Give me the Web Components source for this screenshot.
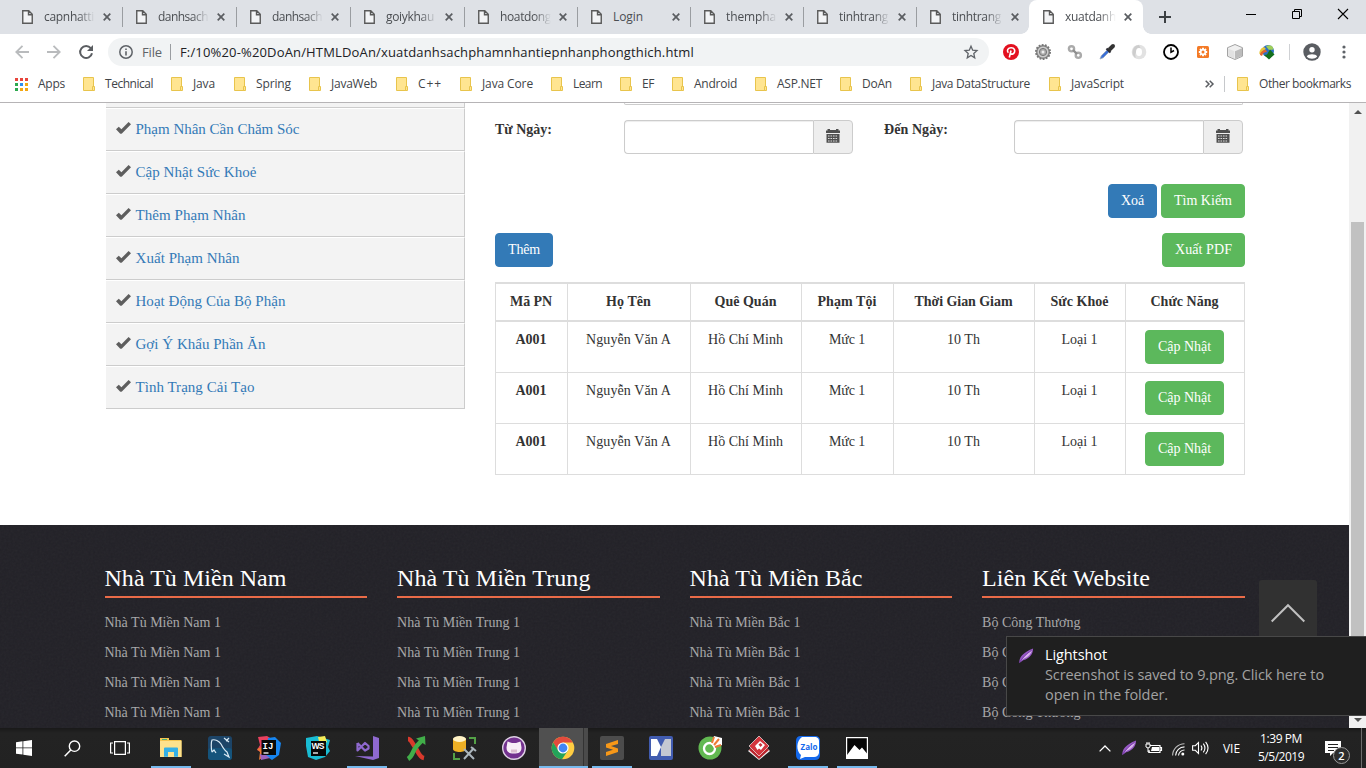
<!DOCTYPE html>
<html lang="vi">
<head>
<meta charset="utf-8">
<title>xuatdanhsachphamnhantiepnhanphongthich</title>
<style>
html,body{margin:0;height:100%;overflow:hidden;background:#fff}
body{font-family:"Open Sans","Noto Sans",sans-serif;font-size:12px}
</style>
</head>
<body>
<desktop-screen></desktop-screen>
<script>
const def=(n,css,html,after)=>customElements.define(n,class extends HTMLElement{
  connectedCallback(){
    if(this.shadowRoot)return;
    const r=this.attachShadow({mode:'open'});
    r.innerHTML=`<style>*{box-sizing:border-box}${css}</style>`+(typeof html==='function'?html(this):html);
    if(after)after(this,r);
  }
});

/* Text whose tracking is tuned to a given advance width */
def('fit-text',':host{display:inline-block;white-space:nowrap;flex:none}span{display:inline-block}','<span><slot></slot></span>',(h,r)=>{
  const w=+h.getAttribute('w');if(!w)return;
  const s=r.querySelector('span'),n=[...h.textContent].length;
  const nat=s.getBoundingClientRect().width;
  s.style.letterSpacing=((w-nat)/n).toFixed(3)+'px';
  h.style.width=w+'px';
});

const feather='<path d="M1.5 16C1 10 5 5 16 .5C16 6 13 11 5.500 13L1.500 16z" fill="#9659c4"/><path d="M3 13.500C6 9 10 5 15 2C14 6 11 9.500 6 11.500z" fill="#d9b4ec"/><path d="M1.500 15.500C5 10 9 6 14.500 2.500" stroke="#7337a5" fill="none"/>';
const ICONS={
 file:['11 14','<path d="M.75.750h6l3.500 3.500v9H.750zM6.500.750v4h3.750" fill="#f3f4f6" stroke="#5a5a5a" stroke-width="1.400"/>'],
 close:['8 8','<path d="M.7.700l6.600 6.600M7.300.700L.700 7.300" stroke="#5a5d61" stroke-width="1.700"/>'],
 plus:['12 12','<path d="M6 0v12M0 6h12" stroke="#3c4043" stroke-width="2"/>'],
 min:['10 10','<path d="M0 5.500h10" stroke="#000"/>'],
 max:['10 10','<path d="M.5 2.500h7v7h-7zM2.500 2.500v-2h7v7h-2" fill="none" stroke="#000"/>'],
 x:['10 10','<path d="M0 0l10 10M10 0L0 10" stroke="#000" stroke-width="1.100"/>'],
 back:['14 14','<path d="M14 7H1.500M7.500.800L1.300 7l6.200 6.200" fill="none" stroke="#b9bbbd" stroke-width="1.800"/>'],
 fwd:['14 14','<path d="M0 7h12.500M6.500.800L12.700 7l-6.200 6.200" fill="none" stroke="#b9bbbd" stroke-width="1.800"/>'],
 reload:['14 14','<path d="M11.800 3.200A6 6 0 1 0 13 8.300" fill="none" stroke="#5a5d61" stroke-width="2"/><path d="M14 0v6H8z" fill="#5a5d61"/>'],
 info:['14 14','<circle cx="7" cy="7" r="6.200" fill="none" stroke="#5f6368" stroke-width="1.500"/><path d="M7 6.200v4.300M7 3.400v1.600" stroke="#5f6368" stroke-width="1.600"/>'],
 star:['14 14','<path d="M7 1.200l1.700 4 4.300.400-3.200 2.900.900 4.300L7 10.500l-3.700 2.300.900-4.300L1 5.600l4.300-.4z" fill="none" stroke="#5f6368" stroke-width="1.300"/>'],
 pin:['16 16','<circle cx="8" cy="8" r="8" fill="#e3101f"/><path d="M6.300 13.500L8 6.500M5.300 8.800C3.300 6.500 5 3.700 8.200 3.700c3.400 0 4 2.700 3.200 4.700-.800 2-3 2.300-3.900.900" fill="none" stroke="#fff" stroke-width="1.600"/>'],
 gear:['16 16','<circle cx="8" cy="8" r="7" fill="#888" stroke="#777" stroke-width="2" stroke-dasharray="1.800 1.350"/><circle cx="8" cy="8" r="5.500" fill="#ccc"/><circle cx="8" cy="8" r="3.600" fill="#aaa" stroke="#777"/><circle cx="8" cy="8" r="1.500" fill="#eee"/>'],
 links:['16 16','<g fill="none" stroke="#aaa" stroke-width="2.400"><circle cx="4.500" cy="4.800" r="2.600"/><circle cx="11.300" cy="11.300" r="2.600"/><path d="M6 6l4 4" stroke="#8f8f8f"/></g>'],
 dropper:['16 16','<path d="M1 15l1.300-3.300L9 5l2 2-6.700 6.700z" fill="#3b6fd6" stroke="#9ab" stroke-width=".8"/><path d="M7.500 4.500l4 4M9.500 6.500L14 2" stroke="#2c2c34" stroke-width="2.200"/><path d="M11 5l3-3" stroke="#333" stroke-width="4" stroke-linecap="round"/>'],
 ring:['16 16','<circle cx="8" cy="8" r="7.300" fill="#e2e2e2"/><path d="M8 1a7 7 0 0 0-3 13c-2-5 1-8 5-9z" fill="#cdcdcd"/><ellipse cx="8" cy="8" rx="3" ry="4" fill="#fff"/>'],
 clock:['16 16','<circle cx="8" cy="8" r="7" fill="#fff" stroke="#000" stroke-width="1.800"/><path d="M8 3.500V8.300l3-1.800" fill="none" stroke="#000" stroke-width="1.500"/>'],
 cog:['12 12','<rect width="12" height="12" rx="1.500" fill="#f47a26"/><path d="M6 1.800v8.400M1.800 6h8.400M3 3l6 6M9 3L3 9" stroke="#fff" stroke-width="1.900"/><circle cx="6" cy="6" r="3" fill="#fff"/><circle cx="6" cy="6" r="1.500" fill="#f47a26"/>'],
 cube:['16 16','<path d="M8 .500l7.500 3.200v8.500L8 15.500.500 12.200V3.700z" fill="#f0f0f0" stroke="#999" stroke-width=".9"/><path d="M8 7.300l7-3.100v7.600L8 15z" fill="#bcbcbc"/><path d="M1.200 4.500L7.300 7.200V14.500l-6-2.700z" fill="#e2e2e2"/>'],
 idm:['16 16','<circle cx="9" cy="7" r="6" fill="#2d6fc4"/><path d="M7 2.500c3-2.500 7-1 7.500 3L10 6z" fill="#9fcf5a"/><path d="M5 3C2 4 0 7 .5 10l3 1C3 8 4 6 7 5z" fill="#e8c53a"/><path d="M1 11c0-3 3-5 6-5l1 2c-3 0-4 1-5 4z" fill="#e0642f"/><path d="M10 15.500l-5-4.500 3-.500L11 5.500l4.500 5z" fill="#14701c"/>'],
 user:['18 18','<circle cx="9" cy="9" r="8.700" fill="#5a5d62"/><circle cx="9" cy="6.700" r="2.700" fill="#fff"/><path d="M3.800 13.500c1-3 9.400-3 10.400 0-2.500 3-7.900 3-10.400 0z" fill="#fff"/>'],
 dots:['4 14','<g fill="#5f6368"><circle cx="2" cy="2" r="1.600"/><circle cx="2" cy="7" r="1.600"/><circle cx="2" cy="12" r="1.600"/></g>'],
 apps:['13 13','<g><path d="M0 0h3v3H0zM5 0h3v3H5zM10 0h3v3h-3z" fill="#e8453c"/><path d="M0 5h3v3H0zM0 10h3v3H0z" fill="#2da94f"/><path d="M5 5h3v3H5z" fill="#2e8ef0"/><path d="M10 5h3v3h-3zM5 10h3v3H5zM10 10h3v3h-3z" fill="#f3a712"/></g>'],
 folder:['12 14','<path d="M.5.500h10v13h-10z" fill="#ffe591" stroke="#e8c44c"/><path d="M9.500 9.500h2v4h-2z" fill="#ffe591" stroke="#e8c44c"/>'],
 more:['9 8','<path d="M.7.700L4 4 .700 7.300M4.700.700L8 4 4.700 7.300" fill="none" stroke="#5a5d61" stroke-width="1.500"/>'],
 check:['15 12','<path d="M0 7.300l2.800-2.600 2.600 2.600L12.600 0 15 2.300 5.900 11.400Q4.900 12.300 4 11.400z" fill="#5e5e5e"/>'],
 cal:['14 15','<path d="M0 5V2.500h1.500V1h2.500v1h6V1h2.500v1.500H14V5zM.500 6h13v8.800H.500z" fill="#505050"/><path d="M2 8h10M2 10.500h10M2 13h10" stroke="#ddd" stroke-width="1" stroke-dasharray="1.600 .9"/>'],
 up:['34 18','<path d="M.7 17.500L17 1.200l16.300 16.300" fill="none" stroke="#c0c0c0" stroke-width="2"/>'],
 feather:['17 17',feather],
 win:['16 16','<path d="M0 2.200L6.500 1.300v6.200H0zM7.300 1.200L16 0v7.500H7.300zM0 8.300h6.500v6.300L0 13.700zM7.300 8.300H16V16l-8.700-1.200z" fill="#fff"/>'],
 search:['17 17','<circle cx="10.500" cy="6.200" r="5.200" fill="none" stroke="#fff" stroke-width="1.400"/><path d="M6.800 10L.700 16.200" stroke="#fff" stroke-width="1.500"/>'],
 tasks:['20 14','<path d="M4.600.600h10.800v12.800H4.600zM3 2H.600v10H3M17 2h2.400v10H17" fill="none" stroke="#fff" stroke-width="1.200"/>'],
 explorer:['24 24','<path d="M1 4V2h9v2h12.500v17H1z" fill="#f5c651"/><path d="M1 5h21.500v16H1z" fill="#fde28d"/><path d="M5 20.800V12.500q0-1 1-1h12q1 0 1 1v8.300h-4V16H9v4.800z" fill="#34b0e6"/><path d="M3 3h5v1H3z" fill="#46ae7a"/>'],
 mysql:['24 24','<rect width="24" height="24" rx="3" fill="#1c4467"/><rect y="12" width="24" height="12" rx="3" fill="#15547c"/><path d="M4 16C3 12 3 6 4 4c3-1 7 1 9 4 2 4 3 6 6 8l2 5-5-3M4 16l2-2 2 3M16 2l5 4M21 2l-3 3" fill="none" stroke="#d8e9f4" stroke-width="1.200"/>'],
 ij:['24 24','<path d="M1 1l9-1 8 5-3 15-12 3 1-7-4-2 3-5z" fill="#e9415f"/><path d="M11 2l7-1 6 6-2 12-7 5-6-4z" fill="#1685f0"/><path d="M0 13l5-2 3 8-6 5 1-8z" fill="#ef7a32"/><path d="M3 18l6 1 4 3-9 2z" fill="#9961be"/><path d="M4.500 4h14.500v15H4.500z" fill="#090909"/><text x="5.500" y="13" font-size="9" font-weight="700" fill="#fff" font-family="Liberation Mono,monospace">IJ</text><path d="M6.500 17h5" stroke="#fff" stroke-width="1.300"/>'],
 ws:['24 24','<path d="M0 2l11-2 13 4-2 7 2 4-5 6-9 3-8-3-2-11z" fill="#19bcd3"/><path d="M12 1l7-1 2 6-7 4z" fill="#f5ed59"/><path d="M5 5h15v15H5z" fill="#090909"/><text x="5.500" y="13" font-size="8.500" font-weight="700" fill="#fff" textLength="13" font-family="Liberation Sans,sans-serif">WS</text><path d="M7 17h5" stroke="#fff" stroke-width="1.300"/>'],
 vs:['24 24','<path d="M18 0l6 2v20l-6 2-18-4 18 .5z" fill="#8f69cf"/><path d="M2.500 7v7.500L10 7l3.500 3v2.500L10 14.500 2.500 7" fill="none" stroke="#8f69cf" stroke-width="2.200" stroke-linejoin="round"/>'],
 xx:['22 24','<path d="M3 3c3 0 4 4 7 8s4 10 9 11" fill="none" stroke="#d8392c" stroke-width="4.500"/><path d="M3 23c5-3 4-7 8-12 3-4 4-4 6-7" fill="none" stroke="#41ae49" stroke-width="4.500"/><path d="M11 2.500L20 0l.5 9z" fill="#41ae49"/>'],
 db:['24 24','<path d="M0 2.500v10.500c0 4 13 4 13 0V2.500" fill="#eeb025"/><ellipse cx="6.500" cy="3" rx="6.500" ry="3" fill="#fff3c6"/><path d="M16 2h6v6M1 17v6h6" fill="none" stroke="#53a146" stroke-width="2"/><path d="M11 13l10 10M21 12L11 23M18 11l5 4" stroke="#abb5bc" stroke-width="2"/>'],
 github:['24 24','<circle cx="12" cy="12" r="11.300" fill="#73328f" stroke="#ded2e4" stroke-width="1.400"/><path d="M5.500 5.500l4.500 1.500h4l4.500-1.500 1 6c0 5-3 6-7.500 6s-7.500-1-7.500-6z" fill="#f7eef6"/><path d="M9 15h6" stroke="#dbbfd0" stroke-width="3"/>'],
 chrome:['24 24','<circle cx="12" cy="12" r="11.300" fill="#ffcd42"/><path d="M2.200 6.400A11.300 11.300 0 0 1 21.800 6.400H12L7 15z" fill="#e34b3d"/><path d="M2.200 6.400A11.300 11.300 0 0 0 11 23.300L17 14.500 7.500 15z" fill="#23a35a"/><circle cx="12" cy="12" r="5.600" fill="#fff"/><circle cx="12" cy="12" r="4.400" fill="#4285f4"/>'],
 sublime:['24 24','<rect width="24" height="24" rx="2" fill="#4c4c4c"/><path d="M6 8l12-4v4l-7 2 7 2.500V16L6 20v-4l7-2.300L6 11.500z" fill="#f79818"/>'],
 note:['24 24','<rect width="24" height="24" rx="2" fill="#415cb0"/><path d="M2 3h6l4 8-4 9H2z" fill="#fff"/><path d="M22 3h-6l-4 8v9h10z" fill="#c4c8d2"/>'],
 coc:['24 24','<circle cx="12" cy="12" r="11.500" fill="#62b951"/><circle cx="11.500" cy="12.500" r="5.500" fill="none" stroke="#fff" stroke-width="2.300"/><circle cx="11.500" cy="12.500" r="2.800" fill="#62b951"/><path d="M13 8l3-8 8 2v7l-8 3z" fill="#fff"/><path d="M14 7l2-6M16 9l5-6M17 11l6-2" stroke="#ed7b35" stroke-width="2"/>'],
 diamond:['22 24','<path d="M11 5l11 10-11 9L0 15z" fill="#f4f4f4"/><path d="M11 4l10 10-10 9L1 14z" fill="#b8252d"/><path d="M11 0l10 10-10 10L1 10z" fill="#d4353d" stroke="#eee" stroke-width=".7"/><path d="M7 10l5-5 5 4-4 5-2-1.500-1.500 1.500z" fill="#fff"/><path d="M10.500 8.500l2-1.500 2 2-2 2z" fill="#c9303a"/>'],
 zalo:['24 24','<path d="M5 0h14q5 0 5 5v14q0 5-5 5H5q-5 0-5-5V5q0-5 5-5z" fill="#1469ec"/><path d="M6 1h14q3 1 3 4v12q-1 4-5 4H9l-5 2 1-4C0 15 0 5 6 1z" fill="#fff"/><text x="4.500" y="14" font-size="8" font-weight="700" fill="#1469ec" textLength="17" lengthAdjust="spacingAndGlyphs" font-family="Open Sans,sans-serif">Zalo</text>'],
 photos:['22 22','<path d="M.6.600h20.800v20.800H.600z" fill="#050505" stroke="#fff" stroke-width="1.200"/><path d="M1 18l7.500-10 5 5 2.500-2.500 5 6V21H1z" fill="#fff"/>'],
 chev:['12 7','<path d="M.6 6.400L6 1l5.400 5.400" fill="none" stroke="#fff" stroke-width="1.300"/>'],
 battery:['17 12','<path d="M5 3.500h10v7H4V8M15 5.500h1.500v3H15" fill="none" stroke="#fff" stroke-width="1.200"/><path d="M7 5h7v4H6z" fill="#fff"/><path d="M1 2h4v3q-2 2-4 0zM2 0v2M4 0v2M3 6v4h2" fill="none" stroke="#fff"/>'],
 wifi:['13 13','<g fill="none" stroke="#fff" stroke-width="1.100"><path d="M.6 12.500A12 12 0 0 1 12.500.700" opacity=".7"/><path d="M3.600 12.500A9 9 0 0 1 12.500 3.900M6.500 12.500a6 6 0 0 1 6-5.500"/></g><circle cx="10.800" cy="11" r="1.500" fill="#fff"/>'],
 vol:['17 14','<path d="M.6 4.700h2.700L6.500 1.500v11L3.300 9.300H.600zM9 4.500q1.800 2.500 0 5M11.300 2.600q3.300 4.400 0 8.800M13.600.800q4.900 6.200 0 12.400" fill="none" stroke="#fff" stroke-width="1.100"/>'],
 msg:['16 16','<path d="M0 0h16v12H8l-3 3v-3H0z" fill="#fff"/><path d="M3 3.500h10M3 6.500h10M3 9.500h6" stroke="#222"/>']
};
def('ui-icon',':host{display:block;flex:none}svg{display:block;width:100%;height:100%;overflow:visible}',h=>{
  const [vb,s]=ICONS[h.getAttribute('name')];const [w,ht]=vb.split(' ');
  h.style.width=(h.getAttribute('w')||w)+'px';h.style.height=(h.getAttribute('h')||ht)+'px';
  return `<svg viewBox="0 0 ${w} ${ht}" aria-hidden="true">${s}</svg>`;
});

/* ---------- browser window ---------- */
def('browser-tab',`:host{display:flex;align-items:center;height:34px;position:relative;flex:none;color:#4b4e52}
ui-icon[name=file]{margin-left:14px}
.t{width:51px;overflow:hidden;margin-left:11px;-webkit-mask:linear-gradient(90deg,#000 34px,transparent 51px);line-height:18px;font-size:12px}
.t.full{-webkit-mask:none}
ui-icon[name=close]{margin-left:7.500px}
:host(:not([active]):not([prev]))::after{content:"";position:absolute;right:-1px;top:7px;width:1px;height:20px;background:#9a9da1}
:host([active]){background:#fff;border-radius:8px 8px 0 0}
:host([active])::before,:host([active])::after{content:"";position:absolute;bottom:0;width:8px;height:8px}
:host([active])::before{left:-8px;background:radial-gradient(circle at 0 0,transparent 7.500px,#fff 8px)}
:host([active])::after{right:-8px;background:radial-gradient(circle at 100% 0,transparent 7.500px,#fff 8px)}`,
h=>{h.style.width=h.getAttribute('width')+'px';return `<ui-icon name="file"></ui-icon><div class="t ${h.textContent==='Login'?'full':''}"><fit-text w="${h.getAttribute('tw')}">${h.textContent}</fit-text></div><ui-icon name="close"></ui-icon>`});

def('tab-strip',`:host{display:flex;height:34px;background:#dee1e6;padding-left:8px}
.new{margin:11px 0 0 16px}.wc{display:flex;gap:36px;margin:9px 18px 0 auto}`,
()=>[['capnhatti',114,50],['danhsach',114,50],['danhsach',114,50],['goiykhau',114,48],['hoatdong',113,51],['Login',113,30],['thempha',113,50],['tinhtrang',113,49],['tinhtrang',113,49],['xuatdanh',114,51]]
 .map(([t,w,f],i)=>`<browser-tab width="${w}" tw="${f}" ${i==9?'active':i==8?'prev':''}>${t}</browser-tab>`).join('')+
 '<ui-icon class="new" name="plus"></ui-icon><div class="wc"><ui-icon name="min"></ui-icon><ui-icon name="max"></ui-icon><ui-icon name="x"></ui-icon></div>');

def('tool-bar',`:host{display:flex;align-items:center;height:36px;background:#fff;padding-left:15px}
.nav{display:flex;gap:18px;width:93px}
.omni{display:flex;align-items:center;width:881px;height:28px;border-radius:14px;background:#f1f3f4;padding:0 11px;font-size:13px;color:#202124}
.f{margin-left:9px;color:#5f6368}.bar{width:1px;height:16px;background:#9a9da1;margin:0 9px 0 8px}
.omni ui-icon[name=star]{margin-left:auto}
.ext{display:flex;width:288px;margin-left:6px}.ext div{width:32px;display:flex;justify-content:center}.ext div{align-items:center}
.v{width:1px;height:16px;background:#cfd1d4;margin:0 13px 0 6px}ui-icon[name=dots]{margin-left:21px}`,
'<div class="nav"><ui-icon name="back"></ui-icon><ui-icon name="fwd"></ui-icon><ui-icon name="reload"></ui-icon></div><div class="omni"><ui-icon name="info"></ui-icon><fit-text class="f" w="20">File</fit-text><span class="bar"></span><fit-text w="514">F:/10%20-%20DoAn/HTMLDoAn/xuatdanhsachphamnhantiepnhanphongthich.html</fit-text><ui-icon name="star"></ui-icon></div><div class="ext">'+
['pin','gear','links','dropper','ring','clock','cog','cube','idm'].map(n=>`<div><ui-icon name="${n}"></ui-icon></div>`).join('')+
'</div><span class="v"></span><ui-icon name="user"></ui-icon><ui-icon name="dots"></ui-icon>');

def('bookmark-item',':host{display:flex;align-items:center;flex:none;gap:10px;font-size:12px;line-height:16px;color:#414448}fit-text{margin-bottom:1px}',
h=>{h.style.width=h.getAttribute('pitch')+'px';return `<ui-icon name="${h.getAttribute('icon')||'folder'}"></ui-icon><fit-text w="${h.getAttribute('tw')}">${h.textContent}</fit-text>`});
def('bookmark-bar',`:host{display:flex;align-items:center;height:33px;background:#fff;padding:0 0 4px 15px;border-bottom:1px solid #b6b4b6}
.v{width:1px;height:16px;background:#c6c8cb;margin:0 12px 0 10px}`,
()=>'<bookmark-item icon="apps" pitch="68" tw="27">Apps</bookmark-item>'+[['Technical',88,48],['Java',63,22],['Spring',75,35],['JavaWeb',87,46],['C++',64,24],['Java Core',91,51],['Learn',69,29],['EF',52,12],['Android',83,43],['ASP.NET',85,45],['DoAn',70,30],['Java DataStructure',139,98],['JavaScript',156,53]]
.map(([t,p,w])=>`<bookmark-item pitch="${p}" tw="${w}">${t}</bookmark-item>`).join('')+'<ui-icon name="more"></ui-icon><span class="v"></span><bookmark-item pitch="115" tw="92">Other bookmarks</bookmark-item>');

/* ---------- page ---------- */
def('side-item',`:host{display:flex;align-items:center;height:43px;background:#f3f3f3;border-top:1px solid #fff;border-bottom:1px solid #ccc;border-right:1px solid #ccc;padding:0 0 1px 10px;font-size:15px;color:#337ab7;line-height:20px}
ui-icon{margin-bottom:2px}fit-text{margin-left:4.500px}`,h=>`<ui-icon name="check"></ui-icon><fit-text w="${h.getAttribute('tw')}">${h.textContent}</fit-text>`);
def('side-menu',':host{display:block;width:359px;margin-left:106px;flex:none}.cut{height:5px;background:#f3f3f3;border:solid #ccc;border-width:0 1px 1px 0}',
'<div class="cut"></div>'+[['Phạm Nhân Cần Chăm Sóc',164],['Cập Nhật Sức Khoẻ',121],['Thêm Phạm Nhân',110],['Xuất Phạm Nhân',104],['Hoạt Động Của Bộ Phận',150],['Gợi Ý Khẩu Phần Ăn',130],['Tình Trạng Cải Tạo',119]].map(([t,w])=>`<side-item tw="${w}">${t}</side-item>`).join(''));

def('ui-button',`:host{display:inline-flex;justify-content:center;height:34px;padding:6px 12px;border:1px solid #337ab7;background:#337ab7;color:#fff;border-radius:4px;font-size:14px;line-height:20px;flex:none}
:host([kind=success]){background:#5cb85c;border-color:#5cb85c}`,h=>`<fit-text w="${h.getAttribute('tw')}">${h.textContent}</fit-text>`);

def('date-field',`:host{display:flex;height:34px;font-size:14px;line-height:20px;font-weight:700}
.l{width:129px}.in{width:189px;height:34px;border:1px solid #ccc;border-radius:4px 0 0 4px;border-right:0;box-shadow:inset 0 1px 1px rgba(0,0,0,.075)}
:host([wide]) .l{width:130px}
.ad{width:40px;height:34px;background:#eee;border:1px solid #ccc;border-radius:0 4px 4px 0;display:flex;align-items:center;justify-content:center;padding-bottom:3px}`,
h=>`<div class="l"><fit-text w="${h.getAttribute('tw')}">${h.textContent}</fit-text></div><div class="in"></div><div class="ad"><ui-icon name="cal"></ui-icon></div>`);

def('inmate-table',`:host{display:block;margin-top:15px}
.r{display:grid;grid-template-columns:72px 123px 111px 92px 141px 91px 120px;height:51px;border-right:1px solid #ddd;border-bottom:1px solid #ddd;font-size:14px;line-height:20px;text-align:center}
.r>div{border-left:1px solid #ddd;padding:8px 1px 0 0}.r>div:first-child,.h{font-weight:700}
.r>div:last-child{padding-right:2px}
.r.h{height:40px;border-top:2px solid #ddd;border-bottom:2px solid #ddd}`,
()=>`<div class="r h">${[['Mã PN',42],['Họ Tên',45],['Quê Quán',62],['Phạm Tội',59],['Thời Gian Giam',98],['Sức Khoẻ',58],['Chức Năng',68]].map(([t,w])=>`<div><fit-text w="${w}">${t}</fit-text></div>`).join('')}</div>`+
`<div class="r">${[['A001',31],['Nguyễn Văn A',85],['Hồ Chí Minh',75],['Mức 1',36],['10 Th',33],['Loại 1',36]].map(([t,w])=>`<div><fit-text w="${w}">${t}</fit-text></div>`).join('')}<div><ui-button kind="success" tw="53">Cập Nhật</ui-button></div></div>`.repeat(3));

def('search-panel',`:host{display:block;width:750px;margin-left:30px;flex:none}
.cut{width:619px;height:2px;margin-left:129px;border:1px solid #ccc;border-top:0;border-radius:0 0 4px 4px}
.dates{display:flex;gap:31px;margin-top:15px}
.a{display:flex;justify-content:flex-end;gap:4px;margin-top:30px}.b{display:flex;justify-content:space-between;margin-top:15px}`,
'<div class="cut"></div><div class="dates"><date-field tw="57">Từ Ngày:</date-field><date-field wide tw="64">Đến Ngày:</date-field></div><div class="a"><ui-button tw="23">Xoá</ui-button><ui-button kind="success" tw="58">Tìm Kiếm</ui-button></div><div class="b"><ui-button tw="32">Thêm</ui-button><ui-button kind="success" tw="57">Xuất PDF</ui-button></div><inmate-table></inmate-table>');

def('footer-column',`:host{display:block;width:262.500px;flex:none}h3{margin:0 0 10px;height:34px;border-bottom:2px solid #ea6b48;font:24px/28px "Liberation Serif",serif;color:#fff;}
div{height:30px;line-height:30px;font-size:14px;color:#a8a8a9}`,
h=>`<h3><fit-text w="${h.getAttribute('hw')}">${h.getAttribute('heading')}</fit-text></h3>`+`<div><fit-text w="${h.getAttribute('tw')}">${h.getAttribute('item')}</fit-text></div>`.repeat(4));
def('page-footer',`:host{display:grid;height:203px;background:#222127;overflow:hidden}
svg,.c{grid-area:1/1}svg{width:1349px;height:203px;opacity:.045}
.c{display:flex;gap:30px;padding:39px 0 0 104.500px;z-index:1}`,
'<svg><filter id="n"><feTurbulence type="fractalNoise" baseFrequency=".45" numOctaves="2"/><feColorMatrix type="saturate" values=".5"/></filter><rect width="1349" height="203" filter="url(#n)"/></svg><div class="c"><footer-column heading="Nhà Tù Miền Nam" hw="182" item="Nhà Tù Miền Nam 1" tw="116.500"></footer-column><footer-column heading="Nhà Tù Miền Trung" hw="193.500" item="Nhà Tù Miền Trung 1" tw="123"></footer-column><footer-column heading="Nhà Tù Miền Bắc" hw="173" item="Nhà Tù Miền Bắc 1" tw="111"></footer-column><footer-column heading="Liên Kết Website" hw="168" item="Bộ Công Thương" tw="98.500"></footer-column></div>');

def('scroll-bar',`:host{display:flex;flex-direction:column;align-items:center;justify-content:space-between;width:17px;height:625px;background:#f1f1f1;padding:7px 0 6px}
.u,.d{border:4px solid transparent;width:0;height:0}.u{border-top:0;border-bottom-color:#505050}.d{border-bottom:0;border-top-color:#505050}
.t{width:13px;height:478px;background:#c1c1c1;margin-top:108px;margin-bottom:auto}`,'<i class="u"></i><i class="t"></i><i class="d"></i>');

def('web-page',`:host{display:flex;height:625px;background:#fff;font-family:"Liberation Serif",serif;color:#333;overflow:hidden;isolation:isolate}
.p{width:1349px}.m{display:flex;height:422px}`,'<div class="p"><div class="m"><side-menu></side-menu><search-panel></search-panel></div><page-footer></page-footer></div><scroll-bar></scroll-bar>');

def('scroll-top',':host{position:absolute;z-index:2;left:1259px;top:580px;width:58px;height:58px;background:#313131;border-radius:3px 3px 0 0;display:flex;justify-content:center;padding-top:24px;box-sizing:border-box}','<ui-icon name="up"></ui-icon>');
def('toast-card',`:host{position:absolute;z-index:3;left:1006px;top:636px;width:361px;height:80px;background:#1f1f1f;border:1px solid #484848;display:flex;padding:8px 0 0 11px;font-size:14.500px;line-height:20px;color:#a2a2a2;box-sizing:border-box}
ui-icon{margin:3px 11px 0 0}b{display:block;font-weight:400;color:#fff}`,'<ui-icon name="feather" w="16" h="16"></ui-icon><div><b><fit-text w="62">Lightshot</fit-text></b><fit-text w="279">Screenshot is saved to 9.png. Click here to</fit-text><br><fit-text w="123">open in the folder.</fit-text></div>');

/* ---------- taskbar ---------- */
def('task-button',`:host{display:flex;align-items:center;justify-content:center;height:40px;width:49px;flex:none}
:host([sys]){width:48px}:host([on]){background:linear-gradient(#76b9ed,#76b9ed) 50% 100%/40px 2px no-repeat}
:host([cur]){background:linear-gradient(#76b9ed,#76b9ed) 0 100%/100% 2px no-repeat,linear-gradient(90deg,#505050 44px,#333 44px,#333 45px,#4b4b4b 45px)}`,h=>`<ui-icon name="${h.getAttribute('icon')}"></ui-icon>`);
def('task-bar',`:host{display:flex;height:40px;background:linear-gradient(#191919,#232323 5px,#222);color:#fff;font-size:12px}
.s{width:2.500px;flex:none}.tray{display:flex;align-items:center;margin-left:auto;width:267px}
.clk{text-align:center;width:46px;line-height:18px;margin:0 21px 0 18px}
.n{position:relative;width:16px;height:16px;margin-top:1px}.n b{position:absolute;left:8px;top:6px;width:17px;height:17px;border-radius:50%;background:#2c2c2c;border:1px solid #999;font:600 11px/15px "Open Sans",sans-serif;text-align:center}
.e{width:1px;height:40px;background:#6c6c6c;margin-left:20px}`,
'<task-button sys icon="win"></task-button><task-button sys icon="search"></task-button><task-button sys icon="tasks"></task-button><span class="s"></span>'+
[['explorer','on'],['mysql'],['ij'],['ws'],['vs','on'],['xx'],['db'],['github'],['chrome','cur'],['sublime','on'],['note'],['coc'],['diamond'],['zalo','on'],['photos','on']].map(([n,s])=>`<task-button icon="${n}" ${s||''}></task-button>`).join('')+
'<div class="tray"><ui-icon name="chev"></ui-icon><ui-icon name="feather" w="16" h="16" style="margin-left:10px"></ui-icon><ui-icon name="battery" style="margin-left:8px"></ui-icon><ui-icon name="wifi" style="margin:3px 0 0 10px"></ui-icon><ui-icon name="vol" style="margin-left:7px"></ui-icon><fit-text w="17" style="margin-left:14px">VIE</fit-text><div class="clk"><fit-text w="42">1:39 PM</fit-text><br><fit-text w="46">5/5/2019</fit-text></div><div class="n"><ui-icon name="msg"></ui-icon><b>2</b></div><span class="e"></span></div>');

def('desktop-screen',':host{display:block;position:relative;width:1366px;height:768px;overflow:hidden}',
'<tab-strip></tab-strip><tool-bar></tool-bar><bookmark-bar></bookmark-bar><web-page></web-page><task-bar></task-bar><scroll-top></scroll-top><toast-card></toast-card>');
</script>
</body>
</html>
